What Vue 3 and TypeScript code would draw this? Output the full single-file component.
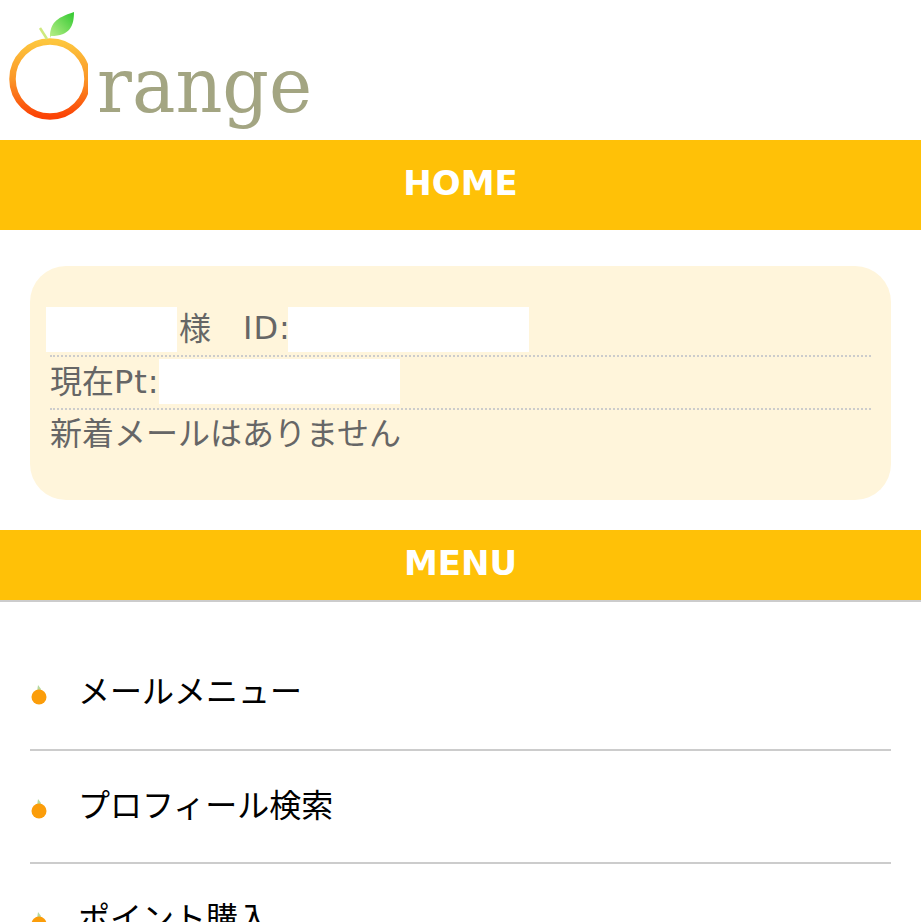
<script setup lang="ts">
// メニュー項目
const menuItems = ['メールメニュー', 'プロフィール検索', 'ポイント購入']
</script>

<template>
  <div class="page">
    <header class="logo">
      <svg class="logo-mark" width="88" height="124" viewBox="0 0 88 124">
        <defs>
          <linearGradient id="ring" x1="0" y1="0" x2="0" y2="1">
            <stop offset="0" stop-color="#fdc63e" />
            <stop offset="0.5" stop-color="#fb9626" />
            <stop offset="1" stop-color="#fb4205" />
          </linearGradient>
          <linearGradient id="leaf" x1="1" y1="0" x2="0" y2="1">
            <stop offset="0" stop-color="#30c830" />
            <stop offset="1" stop-color="#bdf08a" />
          </linearGradient>
        </defs>
        <circle cx="50" cy="79" r="37.5" fill="none" stroke="url(#ring)" stroke-width="6.5" />
        <path d="M40 28 L47 39" fill="none" stroke="#cfe97e" stroke-width="2.5" />
        <path d="M50 38 C50 24 55 18 74 12 C74 26 70 36 51 36 Z" fill="url(#leaf)" />
      </svg>
      <span class="logo-text">range</span>
    </header>

    <h1 class="bar bar-home">HOME</h1>

    <section class="info">
      <div class="info-row first">
        <span class="mask mask-name"></span><span class="txt">様</span><span class="txt id">ID:</span><span class="mask mask-id"></span>
      </div>
      <div class="info-row">
        <span class="txt pt">現在<span class="latin">Pt:</span></span><span class="mask mask-pt"></span>
      </div>
      <div class="info-row last"><span class="txt">新着メールはありません</span></div>
    </section>

    <h2 class="bar bar-menu">MENU</h2>

    <ul class="menu">
      <li v-for="item in menuItems" :key="item" class="menu-item">
        <svg class="dot" width="18" height="22" viewBox="0 0 18 22">
          <path d="M8 1 L11 5 L10 8 L7 8 Z" fill="#b5d8a0" />
          <circle cx="9" cy="13" r="7.5" fill="#fb9d0a" />
        </svg>
        <span class="label">{{ item }}</span>
      </li>
    </ul>
  </div>
</template>

<style>
html, body { margin: 0; overflow: hidden; background: #fff; }
</style>

<style scoped>
.page { height: 922px; overflow: hidden; font-family: "DejaVu Sans", "Noto Sans CJK JP", sans-serif; }
.logo { height: 140px; display: flex; align-items: flex-start; box-sizing: border-box; }
.logo-mark { flex: none; filter: blur(0.5px); }
.logo-text { font-family: "DejaVu Serif", serif; font-size: 76px; line-height: 76px; color: #a3a582; margin: 48px 0 0 9px; transform: scaleX(0.96); transform-origin: left; filter: blur(0.7px); }
.bar { margin: 0; background: #ffc107; color: #fff; text-align: center; font-weight: 700; font-size: 34px; }
.bar-home { height: 90px; line-height: 87px; }
.bar-menu { height: 70px; line-height: 67px; border-bottom: 2px solid #ccc; }
.info { margin: 36px 30px 30px; height: 234px; box-sizing: border-box; padding: 39px 20px 0; background: #fff5db; border-radius: 36px; color: #666; font-size: 32px; }
.info-row { display: flex; align-items: center; height: 51px; border-bottom: 2px dotted #ccc; white-space: nowrap; }
.info-row.first { height: 50px; }
.info-row.last { border-bottom: none; }
.txt { margin-bottom: 9px; }
.pt { margin-bottom: 7px; }
.mask { background: #fff; height: 45px; display: block; margin-top: -2px; }
.mask-name { width: 131px; margin-left: -4px; margin-right: 2px; }
.id { margin-left: 32px; margin-bottom: 4px; letter-spacing: 1px; }
.latin { letter-spacing: 1px; }
.mask-id { width: 241px; margin-left: -3px; }
.mask-pt { width: 241px; margin-left: -1px; }
.menu { list-style: none; margin: 0 30px; padding: 0; }
.menu-item { display: flex; align-items: center; height: 111px; border-bottom: 2px solid #ccc; font-size: 32px; color: #000; }
.menu-item:first-child { height: 149px; padding-top: 34px; box-sizing: border-box; }
.label { margin-bottom: 7px; }
.dot { margin: 4px 30px 0 0; flex: none; }
</style>
